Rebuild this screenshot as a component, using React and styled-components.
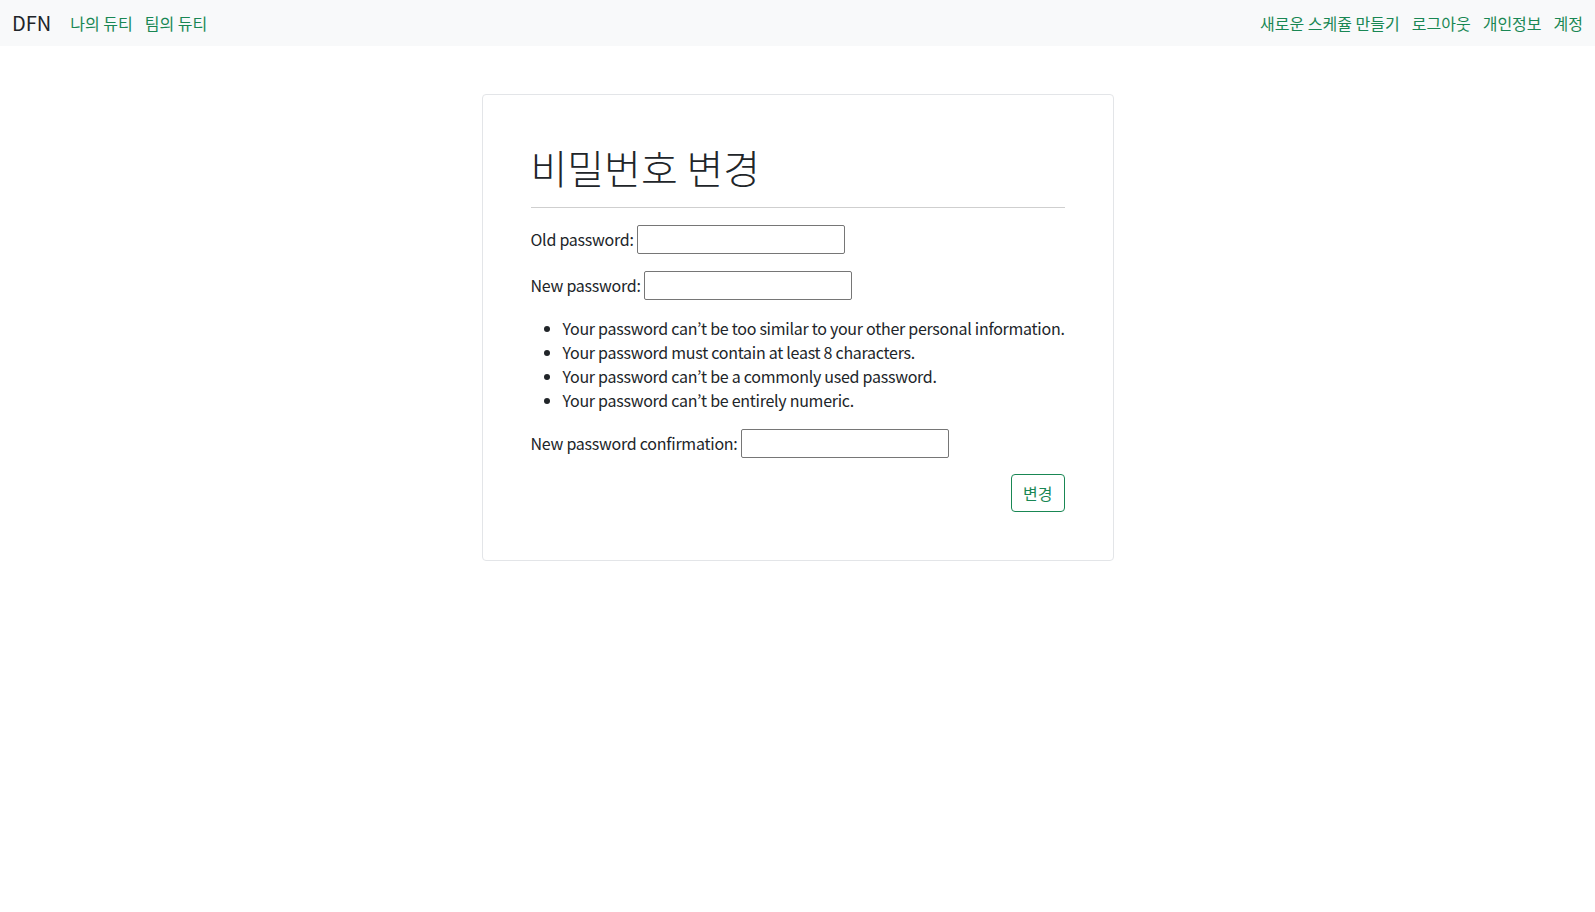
import React from "react";
import styled, { createGlobalStyle } from "styled-components";

const GlobalStyle = createGlobalStyle`
  * {
    box-sizing: border-box;
  }

  body {
    margin: 0;
    background: #fff;
    color: #212529;
    font-family: "Noto Sans CJK KR", "Noto Sans", sans-serif;
    font-size: 16px;
    line-height: 1.5;
  }
`;

const Navbar = styled.nav`
  display: flex;
  justify-content: space-between;
  align-items: center;
  height: 46px;
  padding: 0 12px;
  background-color: #f8f9fa;
`;

const NavGroup = styled.div`
  display: flex;
  align-items: center;
  gap: 12px;
`;

const Brand = styled.span`
  font-size: 20px;
  color: #212529;
  margin-right: 7px;
`;

const NavLink = styled.a`
  font-size: 16px;
  color: #198754;
  text-decoration: none;
  cursor: pointer;
`;

const Card = styled.div`
  width: 632px;
  margin: 48px auto 0;
  padding: 48px;
  border: 1px solid #e3e5e8;
  border-radius: 4px;
  display: flow-root;
`;

const Title = styled.h1`
  margin: 0 0 16px;
  font-family: "Noto Sans CJK KR Light", "Noto Sans CJK KR", sans-serif;
  font-size: 40px;
  font-weight: 300;
  line-height: 1.2;
`;

const Divider = styled.hr`
  margin: 0 0 16px;
  border: 0;
  border-top: 1px solid #cfcfcf;
`;

const Field = styled.p`
  margin: 0 0 16px;
  display: flex;
  align-items: center;
  gap: 3px;
  height: 30px;
  letter-spacing: -0.25px;
`;

const Input = styled.input`
  width: 208px;
  height: 29px;
  border: 1px solid #767676;
  border-radius: 2px;
  padding: 1px 2px;
  font: inherit;
`;

const HelpList = styled.ul`
  margin: 0 0 16px;
  padding-left: 32px;
  letter-spacing: -0.27px;

  li {
    white-space: nowrap;
  }
`;

const SubmitButton = styled.button`
  float: right;
  padding: 6px 11px;
  font: inherit;
  font-size: 16px;
  line-height: 24px;
  color: #198754;
  background: transparent;
  border: 1px solid #198754;
  border-radius: 4px;
  cursor: pointer;
`;

const helps = [
  "Your password can’t be too similar to your other personal information.",
  "Your password must contain at least 8 characters.",
  "Your password can’t be a commonly used password.",
  "Your password can’t be entirely numeric.",
];

export default function App() {
  return (
    <>
      <GlobalStyle />
      <Navbar>
        <NavGroup>
          <Brand>DFN</Brand>
          <NavLink>나의 듀티</NavLink>
          <NavLink>팀의 듀티</NavLink>
        </NavGroup>
        <NavGroup>
          <NavLink>새로운 스케쥴 만들기</NavLink>
          <NavLink>로그아웃</NavLink>
          <NavLink>개인정보</NavLink>
          <NavLink>계정</NavLink>
        </NavGroup>
      </Navbar>
      <Card>
        <Title>비밀번호 변경</Title>
        <Divider />
        <form onSubmit={(e) => e.preventDefault()}>
          <Field>
            <label htmlFor="old">Old password:</label>
            <Input id="old" type="password" />
          </Field>
          <Field>
            <label htmlFor="new1">New password:</label>
            <Input id="new1" type="password" />
          </Field>
          <HelpList>
            {helps.map((h) => (
              <li key={h}>{h}</li>
            ))}
          </HelpList>
          <Field>
            <label htmlFor="new2">New password confirmation:</label>
            <Input id="new2" type="password" />
          </Field>
          <SubmitButton type="submit">변경</SubmitButton>
        </form>
      </Card>
    </>
  );
}
